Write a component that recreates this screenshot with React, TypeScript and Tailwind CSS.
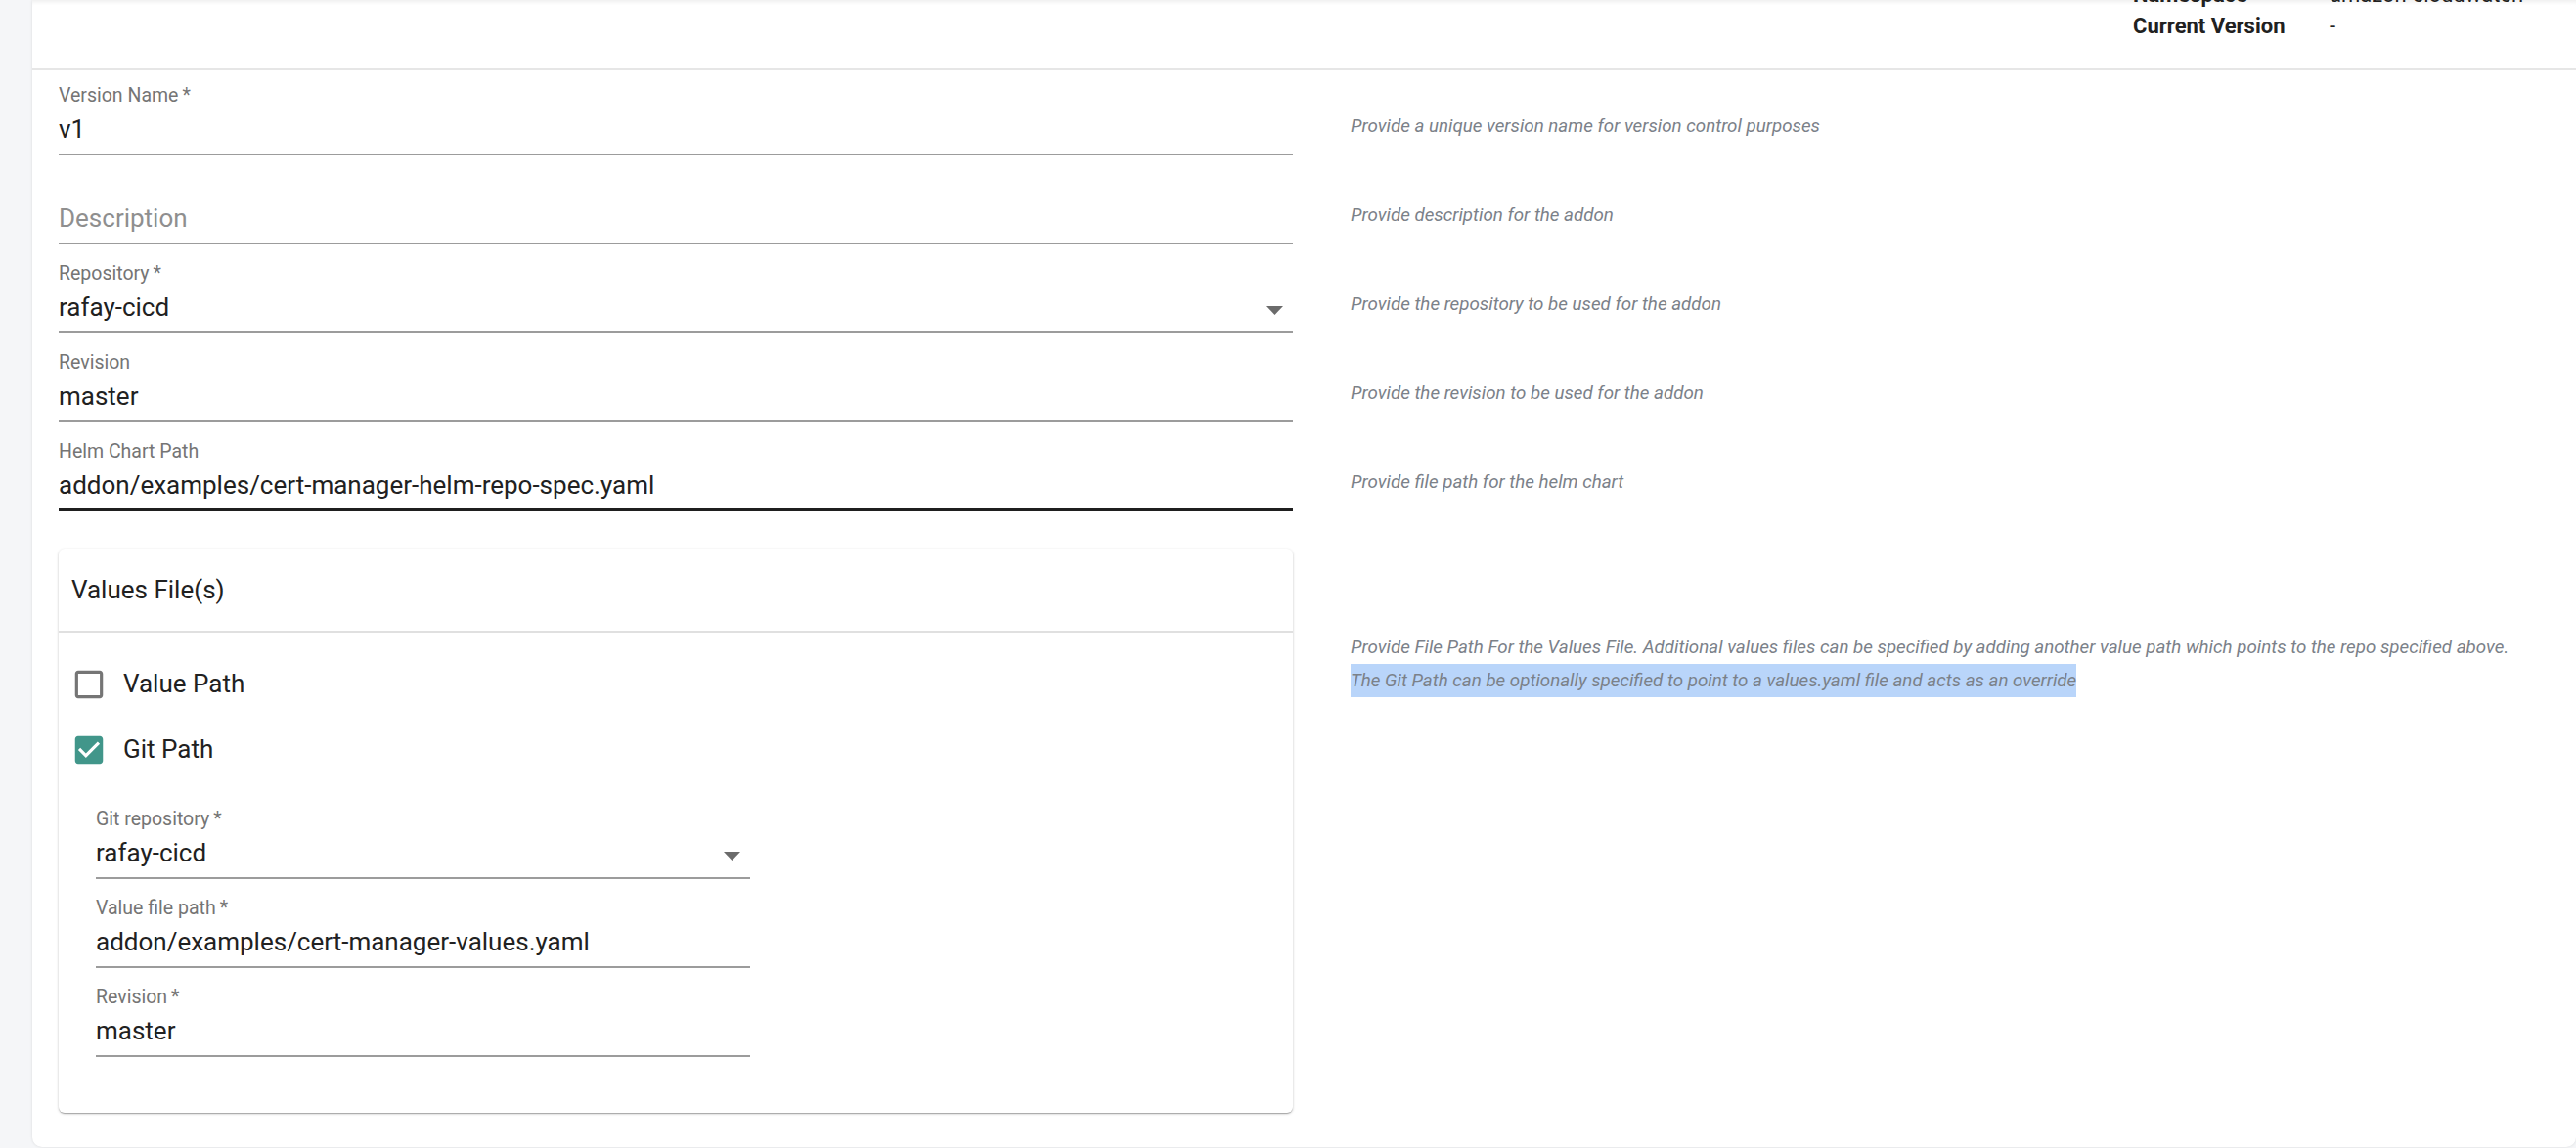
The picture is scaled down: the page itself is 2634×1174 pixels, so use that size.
import React from "react";

const Arrow = ({ className }: { className: string }) => (
  <svg className={className} width="17" height="9" viewBox="0 0 17 9">
    <path d="M0 0 L17 0 L8.5 9 Z" fill="#6b6b6b" />
  </svg>
);

type FieldProps = {
  label?: string;
  value?: string;
  placeholder?: string;
  select?: boolean;
  focused?: boolean;
  first?: boolean;
  width: string;
};

const Field = ({ label, value, placeholder, select, focused, first, width }: FieldProps) => (
  <div className={`${width} ${first ? "pt-[14px]" : "pt-[18px]"}`}>
    <div className="h-[24px] leading-[24px] text-[19.5px] text-[#757575] whitespace-nowrap">{label ?? ""}</div>
    <div className="mt-[2px] h-[40px] flex items-center justify-between">
      {placeholder ? (
        <span className="text-[26px] leading-[40px] text-[#8f8f8f]">{placeholder}</span>
      ) : (
        <span className="text-[26px] leading-[40px] text-[#212121] whitespace-nowrap">{value}</span>
      )}
      {select && <Arrow className="mr-[10px] mt-[6px]" />}
    </div>
    {focused ? (
      <div className="mt-[4px] h-[3px] bg-[#1f1f1f]" />
    ) : (
      <div className="mt-[5px] h-[2px] bg-[#9c9c9c]" />
    )}
  </div>
);

const Helper = ({ children }: { children: React.ReactNode }) => (
  <div className="pl-[59px] pb-[18px] text-[18.75px] leading-[24px] italic text-[#7b8189] whitespace-nowrap">
    {children}
  </div>
);

const CheckRow = ({ checked, label }: { checked: boolean; label: string }) => (
  <div className="h-[67px] flex items-center pl-[12px] gap-[16px]">
    {checked ? (
      <svg width="38" height="38" viewBox="0 0 24 24">
        <path
          fill="#41968a"
          d="M19 3H5c-1.11 0-2 .9-2 2v14c0 1.1.89 2 2 2h14c1.11 0 2-.9 2-2V5c0-1.1-.89-2-2-2zm-9 14l-5-5 1.41-1.41L10 14.17l7.59-7.59L19 8l-9 9z"
        />
      </svg>
    ) : (
      <svg width="38" height="38" viewBox="0 0 24 24">
        <path
          fill="#757575"
          d="M19 5v14H5V5h14m0-2H5c-1.1 0-2 .9-2 2v14c0 1.1.9 2 2 2h14c1.1 0 2-.9 2-2V5c0-1.1-.9-2-2-2z"
        />
      </svg>
    )}
    <span className="text-[26px] text-[#212121]">{label}</span>
  </div>
);

export default function App() {
  return (
    <div className="flex h-[1174px] w-[2634px] overflow-hidden bg-[#f5f6f8] font-['Roboto',sans-serif]">
      <div className="w-[33px] shrink-0" />
      <div className="flex-1 h-[1173px] bg-white rounded-b-[10px] shadow-[0_0_3px_rgba(0,0,0,0.12)] flex flex-col">
        <header className="h-[72px] shrink-0 border-b-2 border-[#e6e6e6] overflow-hidden flex justify-end items-start shadow-[inset_0_5px_4px_-3px_rgba(0,0,0,0.07)]">
          <div className="w-[453px] mt-[-21px] grid grid-cols-[201px_1fr] text-[22px] leading-[32px] text-[#212121]">
            <div className="font-bold">Namespace</div>
            <div>amazon-cloudwatch</div>
            <div className="font-bold">Current Version</div>
            <div>-</div>
          </div>
        </header>
        <main className="flex flex-col pl-[27px]">
          <div className="flex items-end">
            <Field first width="w-[1262px]" label={"Version Name\u2009*"} value="v1" />
            <Helper>Provide a unique version name for version control purposes</Helper>
          </div>
          <div className="flex items-end">
            <Field width="w-[1262px]" placeholder="Description" />
            <Helper>Provide description for the addon</Helper>
          </div>
          <div className="flex items-end">
            <Field width="w-[1262px]" label={"Repository\u2009*"} value="rafay-cicd" select />
            <Helper>Provide the repository to be used for the addon</Helper>
          </div>
          <div className="flex items-end">
            <Field width="w-[1262px]" label="Revision" value="master" />
            <Helper>Provide the revision to be used for the addon</Helper>
          </div>
          <div className="flex items-end">
            <Field width="w-[1262px]" label="Helm Chart Path" value="addon/examples/cert-manager-helm-repo-spec.yaml" focused />
            <Helper>Provide file path for the helm chart</Helper>
          </div>
          <div className="flex items-start mt-[38px]">
            <div className="w-[1262px] shrink-0 rounded-[6px] bg-white shadow-[0_1px_3px_rgba(0,0,0,0.2),0_1px_1px_rgba(0,0,0,0.14),0_2px_1px_-1px_rgba(0,0,0,0.12)]">
              <div className="h-[86px] border-b-2 border-[#e0e0e0] pl-[13px] flex items-center text-[26px] text-[#212121]">
                Values File(s)
              </div>
              <div className="pt-[19px]">
                <CheckRow checked={false} label="Value Path" />
                <CheckRow checked label="Git Path" />
              </div>
              <div className="mt-[8px] pl-[38px] pb-[57px]">
                <Field width="w-[669px]" label={"Git repository\u2009*"} value="rafay-cicd" select />
                <Field width="w-[669px]" label={"Value file path\u2009*"} value="addon/examples/cert-manager-values.yaml" />
                <Field width="w-[669px]" label={"Revision\u2009*"} value="master" />
              </div>
            </div>
            <div className="pl-[59px] pt-[85px] text-[18.75px] leading-[33px] italic text-[#7b8189] whitespace-nowrap">
              <div>
                Provide File Path For the Values File. Additional values files can be specified by adding another value path which points to the repo specified above.
              </div>
              <div>
                <span className="inline-block h-[34px] leading-[34px] bg-[#b9d5fa]">
                  The Git Path can be optionally specified to point to a values.yaml file and acts as an override
                </span>
              </div>
            </div>
          </div>
        </main>
      </div>
    </div>
  );
}
